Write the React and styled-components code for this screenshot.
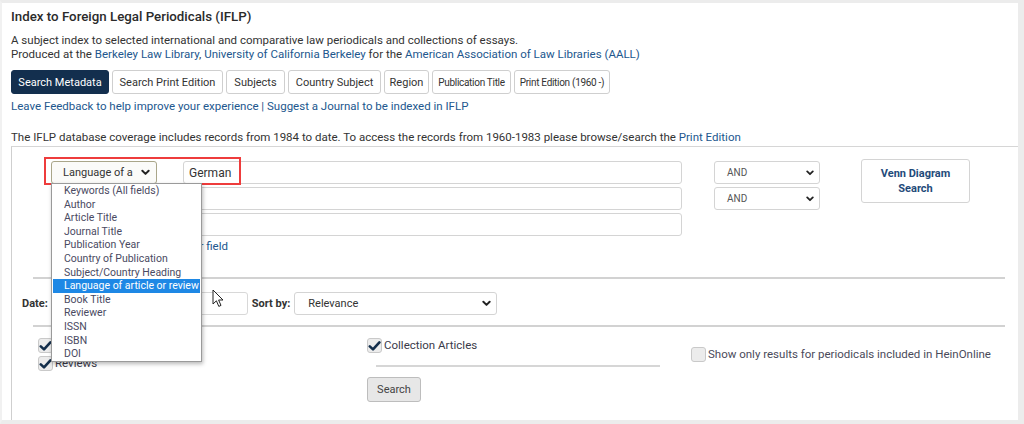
import React from "react";
import styled, { createGlobalStyle } from "styled-components";

const GlobalStyle = createGlobalStyle`
    html, body {
        margin: 0;
        padding: 0;
        background: #ffffff;
    }
    body {
        font-family: Roboto, "Liberation Sans", Arial, sans-serif;
        color: #333333;
    }
`;

const tabs = [
    { label: "Search Metadata", width: 98 },
    { label: "Search Print Edition", width: 111 },
    { label: "Subjects", width: 59 },
    { label: "Country Subject", width: 93 },
    { label: "Region", width: 45 },
    { label: "Publication Title", width: 79, narrow: true },
    { label: "Print Edition (1960 -)", width: 96, narrow: true },
];

const fields = [
    "Keywords (All fields)",
    "Author",
    "Article Title",
    "Journal Title",
    "Publication Year",
    "Country of Publication",
    "Subject/Country Heading",
    "Language of article or review",
    "Book Title",
    "Reviewer",
    "ISSN",
    "ISBN",
    "DOI",
];

function Chevron({ size = 9 }) {
    return (
        <svg width={size} height={size} viewBox="0 0 10 10">
            <path d="M1.5 3 L5 6.5 L8.5 3" fill="none" stroke="#222" strokeWidth="2.2" strokeLinecap="round" strokeLinejoin="round" />
        </svg>
    );
}

function Check({ checked }) {
    return (
        <CheckBox>
            {checked && (
                <svg width="13" height="12" viewBox="0 0 13 12">
                    <path d="M1.8 6.4 L5 9.4 L11.4 2.4" fill="none" stroke="#142f4c" strokeWidth="2.6" strokeLinecap="round" strokeLinejoin="round" />
                </svg>
            )}
        </CheckBox>
    );
}

function Cursor() {
    return (
        <CursorMark width="13" height="19" viewBox="0 0 13 19">
            <path d="M1 1 L1 15 L4.4 11.8 L6.8 17.4 L9 16.4 L6.6 11 L11 11 Z" fill="#ffffff" stroke="#222" strokeWidth="1" strokeLinejoin="round" />
        </CursorMark>
    );
}

function App() {
    return (
        <Frame>
            <GlobalStyle />
            <Title>Index to Foreign Legal Periodicals (IFLP)</Title>
            <Intro>
                <p>A subject index to selected international and comparative law periodicals and collections of essays.</p>
                <p>
                    Produced at the <Link>Berkeley Law Library</Link>, <Link>University of California Berkeley</Link> for the{" "}
                    <Link>American Association of Law Libraries (AALL)</Link>
                </p>
            </Intro>
            <TabBar>
                {tabs.map((t, i) => (
                    <Tab key={t.label} $active={i === 0} $width={t.width} $narrow={t.narrow}>
                        {t.label}
                    </Tab>
                ))}
            </TabBar>
            <LinkLine>
                <Link>Leave Feedback to help improve your experience</Link> | <Link>Suggest a Journal to be indexed in IFLP</Link>
            </LinkLine>
            <Coverage>
                The IFLP database coverage includes records from 1984 to date. To access the records from 1960-1983 please browse/search the{" "}
                <Link>Print Edition</Link>
            </Coverage>

            <Panel>
                <QueryGrid>
                    <FieldSelect $focused>
                        <span>Language of a</span>
                        <Chevron />
                    </FieldSelect>
                    <TextInput>German</TextInput>
                    <BoolSelect>
                        <span>AND</span>
                        <Chevron size={8} />
                    </BoolSelect>
                    <VennButton>
                        Venn Diagram
                        <br />
                        Search
                    </VennButton>

                    <FieldSelect>
                        <span>Keywords</span>
                        <Chevron />
                    </FieldSelect>
                    <TextInput />
                    <BoolSelect>
                        <span>AND</span>
                        <Chevron size={8} />
                    </BoolSelect>

                    <FieldSelect>
                        <span>Keywords</span>
                        <Chevron />
                    </FieldSelect>
                    <TextInput />
                </QueryGrid>
                <AddField>
                    <Link>+ Add another field</Link>
                </AddField>

                <Divider $top={23} />

                <FilterRow>
                    <Label>Date:</Label>
                    <DateInput />
                    <Label>Sort by:</Label>
                    <SortSelect>
                        <span>Relevance</span>
                        <Chevron />
                    </SortSelect>
                </FilterRow>

                <Divider $top={33} />

                <OptionGrid>
                    <OptionColumn>
                        <CheckItem>
                            <Check checked />
                            Articles
                        </CheckItem>
                        <CheckItem>
                            <Check checked />
                            Reviews
                        </CheckItem>
                    </OptionColumn>
                    <OptionColumn>
                        <CheckItem>
                            <Check checked />
                            Collection Articles
                        </CheckItem>
                        <ShortRule />
                        <SearchButton>Search</SearchButton>
                    </OptionColumn>
                    <OptionColumn $offset={9}>
                        <CheckItem $muted>
                            <Check />
                            Show only results for periodicals included in HeinOnline
                        </CheckItem>
                    </OptionColumn>
                </OptionGrid>

                <Highlight />
                <FieldMenu>
                    {fields.map((f) => (
                        <MenuOption key={f} $selected={f === "Language of article or review"}>
                            {f}
                        </MenuOption>
                    ))}
                </FieldMenu>
                <Cursor />
            </Panel>
        </Frame>
    );
}

const Frame = styled.div`
    width: 1024px;
    height: 424px;
    box-sizing: border-box;
    border-top: 3px solid #ececec;
    border-left: 2px solid #f1f1f1;
    border-right: 6px solid #ececec;
    border-bottom: 4px solid #ececec;
    padding: 5px 0 0 9px;
    overflow: hidden;
    font-size: 11.5px;
`;

const Title = styled.h1`
    margin: 0;
    font-size: 13.3px;
    line-height: 18px;
    font-weight: 500;
    color: #2b2b2b;
`;

const Intro = styled.div`
    margin-top: 7px;
    p {
        margin: 0;
        font-size: 11.5px;
        line-height: 14px;
        color: #333;
    }
`;

const Link = styled.a`
    color: #22578e;
    text-decoration: none;
    cursor: pointer;
`;

const TabBar = styled.div`
    display: flex;
    gap: 3px;
    margin-top: 9px;
`;

const Tab = styled.div`
    width: ${(p) => p.$width}px;
    height: 24px;
    box-sizing: border-box;
    display: flex;
    align-items: center;
    justify-content: center;
    white-space: nowrap;
    font-size: ${(p) => (p.$narrow ? "10px" : "11px")};
    letter-spacing: ${(p) => (p.$narrow ? "-0.3px" : "0")};
    border-radius: 3px;
    border: 1px solid ${(p) => (p.$active ? "#132f4e" : "#cfcfcf")};
    background: ${(p) => (p.$active ? "#132f4e" : "#ffffff")};
    color: ${(p) => (p.$active ? "#ffffff" : "#333333")};
`;

const LinkLine = styled.div`
    margin-top: 4px;
    line-height: 16px;
    color: #22578e;
`;

const Coverage = styled.div`
    margin-top: 15px;
    line-height: 16px;
    color: #333;
`;

const Panel = styled.div`
    position: relative;
    margin-top: 1px;
    height: 300px;
    border-top: 1px solid #d6d6d6;
    border-left: 1px solid #cfcfcf;
    padding: 14px 13px 0 0;
`;

const QueryGrid = styled.div`
    display: grid;
    grid-template-columns: 106px 26px 499px 32px 106px 41px 109px;
    grid-template-rows: 23px 23px 23px;
    row-gap: 3px;
    padding-left: 39px;
    grid-template-areas:
        "f1 . i1 . b1 . v"
        "f2 . i2 . b2 . v"
        "f3 . i3 . .  . .";
    & > :nth-child(1) { grid-area: f1; }
    & > :nth-child(2) { grid-area: i1; }
    & > :nth-child(3) { grid-area: b1; }
    & > :nth-child(4) { grid-area: v; }
    & > :nth-child(5) { grid-area: f2; }
    & > :nth-child(6) { grid-area: i2; }
    & > :nth-child(7) { grid-area: b2; }
    & > :nth-child(8) { grid-area: f3; }
    & > :nth-child(9) { grid-area: i3; }
`;

const boxBase = `
    box-sizing: border-box;
    border: 1px solid #cccccc;
    border-radius: 3px;
    background: #ffffff;
    font-size: 11px;
    color: #333;
    display: flex;
    align-items: center;
`;

const FieldSelect = styled.div`
    ${boxBase}
    justify-content: space-between;
    padding: 0 6px 0 11px;
    border-color: ${(p) => (p.$focused ? "#aaa68a" : "#cccccc")};
    background: #fbfbf9;
`;

const TextInput = styled.div`
    ${boxBase}
    font-size: 12px;
    padding: 0 5px;
    border-color: #d4d4d4;
`;

const BoolSelect = styled.div`
    ${boxBase}
    justify-content: space-between;
    padding: 0 5px 0 12px;
    font-size: 10px;
    color: #555;
    border-color: #d4d4d4;
`;

const VennButton = styled.div`
    align-self: start;
    margin-top: -2px;
    height: 44px;
    box-sizing: border-box;
    border: 1px solid #d4d4d4;
    border-radius: 3px;
    display: flex;
    align-items: center;
    justify-content: center;
    text-align: center;
    font-size: 11px;
    font-weight: 700;
    line-height: 15px;
    color: #1f4b7a;
`;

const AddField = styled.div`
    margin-top: 2px;
    width: 216px;
    text-align: right;
    line-height: 16px;
    font-size: 11.5px;
`;

const Divider = styled.div`
    margin-left: 21px;
    height: 2px;
    background: #d2d2d2;
    margin-top: ${(p) => p.$top}px;
`;

const FilterRow = styled.div`
    display: flex;
    align-items: center;
    gap: 4px;
    padding-left: 10px;
    margin-top: 13px;
    margin-bottom: -23px;
    height: 23px;
`;

const Label = styled.span`
    font-size: 11px;
    font-weight: 700;
    color: #333;
`;

const DateInput = styled.div`
    ${boxBase}
    width: 190px;
    height: 23px;
    margin-left: 6px;
    border-color: #d8d8d8;
`;

const SortSelect = styled.div`
    ${boxBase}
    width: 203px;
    height: 23px;
    justify-content: space-between;
    padding: 0 5px 0 13px;
    border-color: #d4d4d4;
`;

const OptionGrid = styled.div`
    display: grid;
    grid-template-columns: 329px 324px 1fr;
    padding-left: 26px;
    margin-top: 11px;
`;

const OptionColumn = styled.div`
    display: flex;
    flex-direction: column;
    align-items: flex-start;
    gap: 3px;
    padding-top: ${(p) => p.$offset || 0}px;
`;

const CheckItem = styled.label`
    display: flex;
    align-items: center;
    gap: 2px;
    font-size: 11.5px;
    line-height: 15px;
    color: ${(p) => (p.$muted ? "#4a4a5a" : "#3a3a4a")};
`;

const CheckBox = styled.span`
    width: 15px;
    height: 15px;
    box-sizing: border-box;
    border: 1px solid #c9c9c9;
    border-radius: 3px;
    background: #ececec;
    display: inline-flex;
    align-items: center;
    justify-content: center;
`;

const ShortRule = styled.div`
    width: 284px;
    height: 2px;
    background: #d6d6d6;
    margin: 9px 0 0 9px;
`;

const SearchButton = styled.div`
    margin-top: 7px;
    width: 54px;
    height: 25px;
    box-sizing: border-box;
    border: 1px solid #bdbdbd;
    border-radius: 3px;
    background: #e7e7e7;
    display: flex;
    align-items: center;
    justify-content: center;
    font-size: 11px;
    color: #444;
`;

const Highlight = styled.div`
    position: absolute;
    left: 32px;
    top: 10px;
    width: 197px;
    height: 28px;
    box-sizing: border-box;
    border: 2px solid #ee3c3c;
    pointer-events: none;
`;

const FieldMenu = styled.div`
    position: absolute;
    left: 39px;
    top: 36px;
    width: 151px;
    box-sizing: border-box;
    padding: 0 1px;
    background: #ffffff;
    border: 1px solid #9a9a9a;
    box-shadow: 1px 2px 4px rgba(0, 0, 0, 0.28);
`;

const MenuOption = styled.div`
    font-size: 10.5px;
    line-height: 13.6px;
    padding-left: 11px;
    white-space: nowrap;
    color: ${(p) => (p.$selected ? "#ffffff" : "#4a4a62")};
    background: ${(p) => (p.$selected ? "#1e88e5" : "transparent")};
`;

const CursorMark = styled.svg`
    position: absolute;
    left: 200px;
    top: 142px;
`;

export default App;
